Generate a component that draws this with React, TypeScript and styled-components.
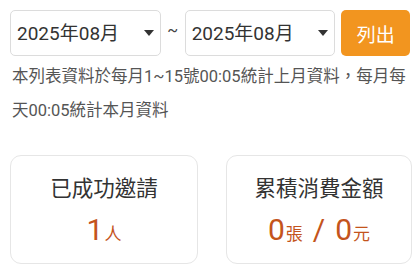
import React from 'react'
import styled, { createGlobalStyle } from 'styled-components'

const GlobalStyle = createGlobalStyle`
  body {
    margin: 0;
    background: #fff;
    font-family: Roboto, "Noto Sans CJK TC", sans-serif;
  }
`

const Page = styled.div`
  width: 420px;
  height: 280px;
  box-sizing: border-box;
  padding: 10px 10px 0 10px;
  overflow: hidden;
`

const Toolbar = styled.div`
  display: flex;
  align-items: center;
  height: 46px;
`

const SelectWrap = styled.div`
  position: relative;
  width: 152px;
  height: 46px;
`

const Select = styled.select`
  appearance: none;
  width: 100%;
  height: 100%;
  box-sizing: border-box;
  border: 1px solid #dcdcdc;
  border-radius: 5px;
  background: #fff;
  padding: 0 0 0 6px;
  font-family: Roboto, "Noto Sans CJK TC", sans-serif;
  font-size: 19px;
  color: #333;
  outline: none;
`

const Caret = styled.svg`
  position: absolute;
  right: 7px;
  top: 20px;
  pointer-events: none;
`

const Tilde = styled.span`
  width: 24px;
  text-align: center;
  font-size: 16px;
  color: #444;
  margin-top: -6px;
`

const ListButton = styled.button`
  margin-left: 6px;
  width: 69px;
  height: 46px;
  border: none;
  border-radius: 5px;
  background: #f2951f;
  color: #fff;
  font-family: "Noto Sans CJK TC", sans-serif;
  font-size: 19px;
  cursor: pointer;
`

const Note = styled.p`
  margin: 4px 0 0 2px;
  font-size: 16.5px;
  line-height: 34px;
  color: #555;
`

const Cards = styled.div`
  display: grid;
  grid-template-columns: 188px 186px;
  column-gap: 28px;
  margin-top: 27px;
`

const Card = styled.div`
  height: 109px;
  box-sizing: border-box;
  border: 1px solid #e6e6e6;
  border-radius: 11px;
  display: flex;
  flex-direction: column;
  align-items: center;
  padding-top: 17px;
`

const CardTitle = styled.div`
  font-size: 21.5px;
  line-height: 32px;
  color: #333;
`

const Value = styled.div`
  margin-top: 8px;
  color: #c4541c;
  display: flex;
  align-items: baseline;
  line-height: 34px;
`

const Big = styled.span`
  font-size: 30px;
`

const Unit = styled.span`
  font-size: 17px;
  margin-left: 1px;
`

const Slash = styled.span`
  font-size: 30px;
  margin: 0 10px;
`

const DateSelect = ({ value }: { value: string }) => (
  <SelectWrap>
    <Select defaultValue={value}>
      <option value={value}>{value}</option>
    </Select>
    <Caret width="10" height="6" viewBox="0 0 10 6">
      <path d="M0 0 H10 L5 6 Z" fill="#333" />
    </Caret>
  </SelectWrap>
)

const App = () => {
  return (
    <Page>
      <GlobalStyle />
      <Toolbar>
        <DateSelect value="2025年08月" />
        <Tilde>~</Tilde>
        <DateSelect value="2025年08月" />
        <ListButton>列出</ListButton>
      </Toolbar>
      <Note>本列表資料於每月1~15號00:05統計上月資料，每月每天00:05統計本月資料</Note>
      <Cards>
        <Card>
          <CardTitle>已成功邀請</CardTitle>
          <Value>
            <Big>1</Big>
            <Unit>人</Unit>
          </Value>
        </Card>
        <Card>
          <CardTitle>累積消費金額</CardTitle>
          <Value>
            <Big>0</Big>
            <Unit>張</Unit>
            <Slash>/</Slash>
            <Big>0</Big>
            <Unit>元</Unit>
          </Value>
        </Card>
      </Cards>
    </Page>
  )
}

export default App
